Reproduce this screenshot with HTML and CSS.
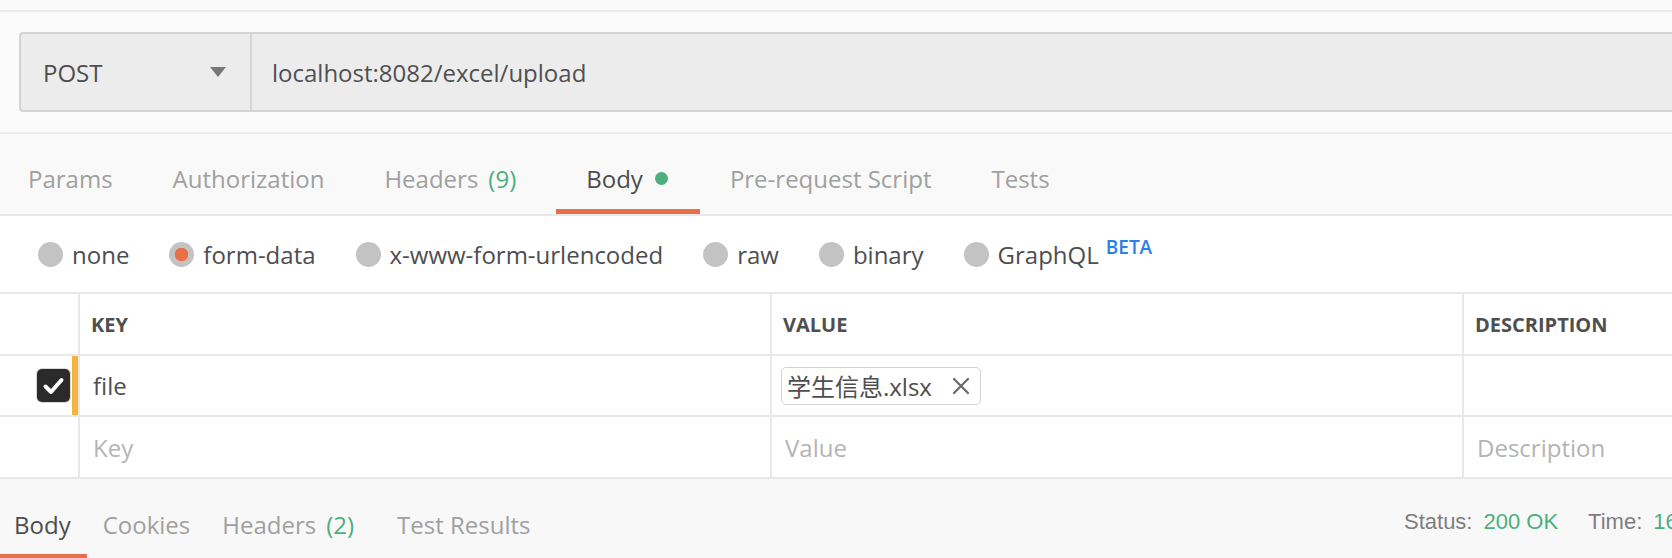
FILE: index.html
```html
<!DOCTYPE html>
<html lang="zh-CN">
<head>
<meta charset="utf-8">
<title>POST localhost:8082/excel/upload</title>
<link rel="stylesheet" href="styles.css">
</head>
<body>
<div class="app">
  <div class="topstrip"></div>

  <div class="request">
    <div class="urlbar">
      <div class="method">
        <span class="method-name">POST</span>
        <svg class="caret" width="16" height="10" viewBox="0 0 16 10"><path d="M0 0H16L8 10Z"/></svg>
      </div>
      <div class="url">localhost:8082/excel/upload</div>
    </div>
  </div>

  <nav class="req-tabs">
    <span class="tab first">Params</span>
    <span class="tab">Authorization</span>
    <span class="tab with-count">Headers <span class="count">(9)</span></span>
    <span class="tab active">Body <span class="dot"></span></span>
    <span class="tab">Pre-request Script</span>
    <span class="tab">Tests</span>
  </nav>

  <div class="body-modes">
    <label class="mode"><span class="radio"></span>none</label>
    <label class="mode"><span class="radio on"></span>form-data</label>
    <label class="mode"><span class="radio"></span>x-www-form-urlencoded</label>
    <label class="mode"><span class="radio"></span>raw</label>
    <label class="mode"><span class="radio"></span>binary</label>
    <label class="mode"><span class="radio"></span><span>GraphQL<span class="beta">BETA</span></span></label>
  </div>

  <div class="kv-table">
    <div class="kv-row head">
      <div class="cell check"></div>
      <div class="cell">KEY</div>
      <div class="cell">VALUE</div>
      <div class="cell">DESCRIPTION</div>
    </div>
    <div class="kv-row filled">
      <div class="cell check marked">
        <span class="checkbox">
          <svg width="33" height="33" viewBox="0 0 33 33"><path d="M8.5 17.5L14 23L24.5 11" fill="none" stroke="#fff" stroke-width="4" stroke-linecap="round" stroke-linejoin="round"/></svg>
        </span>
      </div>
      <div class="cell">file</div>
      <div class="cell file-cell">
        <span class="chip">学生信息.xlsx
          <svg class="chip-x" width="18" height="18" viewBox="0 0 18 18"><path d="M2 2L16 16M16 2L2 16" stroke="#6a6a6a" stroke-width="2.2" stroke-linecap="round"/></svg>
        </span>
      </div>
      <div class="cell"></div>
    </div>
    <div class="kv-row empty">
      <div class="cell check"></div>
      <div class="cell placeholder">Key</div>
      <div class="cell placeholder">Value</div>
      <div class="cell placeholder">Description</div>
    </div>
  </div>

  <div class="response">
    <nav class="resp-tabs">
      <span class="rtab active">Body</span>
      <span class="rtab">Cookies</span>
      <span class="rtab with-count">Headers <span class="count">(2)</span></span>
      <span class="rtab">Test Results</span>
    </nav>
    <div class="resp-meta">
      <span class="meta-label">Status:</span><span class="meta-value">200 OK</span>
      <span class="meta-label gap">Time:</span><span class="meta-value">164 ms</span>
    </div>
  </div>
</div>
</body>
</html>
```

FILE: styles.css
```css
* {
  box-sizing: border-box;
}

html, body {
  margin: 0;
  padding: 0;
}

body {
  width: 1672px;
  height: 558px;
  overflow: hidden;
  background: #fbfbfb;
  font-family: "Open Sans", "Noto Sans CJK SC", sans-serif;
  color: #505050;
}

.app {
  width: 100%;
}

.topstrip {
  height: 12px;
  background: #fafafa;
  border-bottom: 2px solid #ebebeb;
}

/* request url bar */
.request {
  padding: 20px 0 20px 19px;
  background: #fbfbfb;
  border-bottom: 2px solid #ebebeb;
}

.urlbar {
  display: flex;
  height: 80px;
  background: #ececec;
  border: 2px solid #d4d4d4;
  border-right: none;
  border-radius: 4px 0 0 4px;
}

.method {
  width: 231px;
  display: flex;
  align-items: center;
  padding: 0 24px 0 22px;
  border-right: 2px solid #d6d6d6;
  font-size: 24px;
  color: #4e4e4e;
}

.caret {
  margin-left: auto;
  fill: #777;
}

.url {
  display: flex;
  align-items: center;
  padding-left: 20px;
  font-size: 24px;
  color: #505050;
}

/* request tabs */
.req-tabs {
  display: flex;
  height: 82px;
  background: #f9f9f9;
  border-bottom: 2px solid #e8e8e8;
}

.tab {
  display: flex;
  align-items: center;
  height: 80px;
  padding: 14px 30px 0;
  border-bottom: 5px solid transparent;
  font-size: 24px;
  color: #a0a0a0;
  white-space: nowrap;
}

.tab.first {
  padding-left: 28px;
}

.tab .count,
.rtab .count {
  color: #4caf7d;
  margin-left: 10px;
}

.tab.with-count {
  padding-right: 40px;
}

.tab.active {
  color: #4d4d4d;
  padding-right: 32px;
  border-bottom-color: #e6704a;
}

.dot {
  width: 13px;
  height: 13px;
  margin-left: 12px;
  border-radius: 50%;
  background: #4caf7d;
}

/* body mode radios */
.body-modes {
  display: flex;
  align-items: center;
  height: 76px;
  padding-left: 38px;
  background: #fff;
  font-size: 24px;
  color: #4e4e4e;
}

.mode {
  display: flex;
  align-items: center;
  margin-right: 40px;
  white-space: nowrap;
}

.radio {
  width: 25px;
  height: 25px;
  margin-right: 9px;
  border-radius: 50%;
  background: #c3c3c3;
}

.radio.on {
  background: radial-gradient(circle, #e8704a 0 6.5px, #c3c3c3 7px);
}

.beta {
  margin-left: 7px;
  font-size: 19px;
  font-weight: 600;
  color: #2b7fe8;
  vertical-align: 10px;
  line-height: 1;
}

/* key value table */
.kv-table {
  background: #fff;
  border-top: 2px solid #e8e8e8;
}

.kv-row {
  display: grid;
  grid-template-columns: 78px 692px 692px 1fr;
  height: 62px;
  border-bottom: 2px solid #e8e8e8;
}

.kv-row.filled {
  height: 61px;
}

.cell {
  display: flex;
  align-items: center;
  padding: 0 13px;
  border-left: 2px solid #e8e8e8;
  font-size: 24px;
  color: #505050;
  white-space: nowrap;
}

.cell.check {
  border-left: none;
  padding: 0;
}

.head .cell {
  font-size: 20px;
  font-weight: 700;
  color: #4f4f4f;
  padding-left: 11px;
}

.head .cell.check {
  padding: 0;
}

.cell.marked {
  justify-content: flex-end;
  padding-right: 2px;
  border-right: 6px solid #f4b540;
}

.checkbox {
  display: flex;
  width: 33px;
  height: 33px;
  border-radius: 5px;
  background: #2a2a2a;
  box-shadow: 0 0 0 1px #d8d8d8;
}

.placeholder {
  color: #b4b4b4;
}

.file-cell {
  padding-left: 9px;
}

.chip {
  display: flex;
  align-items: center;
  height: 38px;
  padding: 0 10px 0 5px;
  border: 1px solid #d2d2d2;
  border-radius: 5px;
  font-size: 24px;
  color: #4e4e4e;
}

.chip-x {
  margin-left: 20px;
}

/* response */
.response {
  display: flex;
  height: 80px;
  background: #f8f8f8;
}

.resp-tabs {
  display: flex;
}

.rtab {
  display: flex;
  align-items: center;
  height: 80px;
  padding: 16px 16px 0;
  border-bottom: 5px solid transparent;
  font-size: 24px;
  color: #a0a0a0;
  white-space: nowrap;
}

.rtab:first-child {
  padding-left: 14px;
}

.rtab.with-count {
  padding-right: 27px;
}

.rtab.active {
  color: #4d4d4d;
  border-bottom-color: #e6704a;
}

.resp-meta {
  margin-left: auto;
  width: 268px;
  flex: none;
  display: flex;
  align-items: center;
  padding-top: 6px;
  font-family: "Liberation Sans", Arial, sans-serif;
  font-size: 22px;
  white-space: nowrap;
}

.meta-label {
  color: #7e7e7e;
}

.meta-label.gap {
  margin-left: 30px;
}

.meta-value {
  margin-left: 11px;
  color: #4caf7d;
}
```
